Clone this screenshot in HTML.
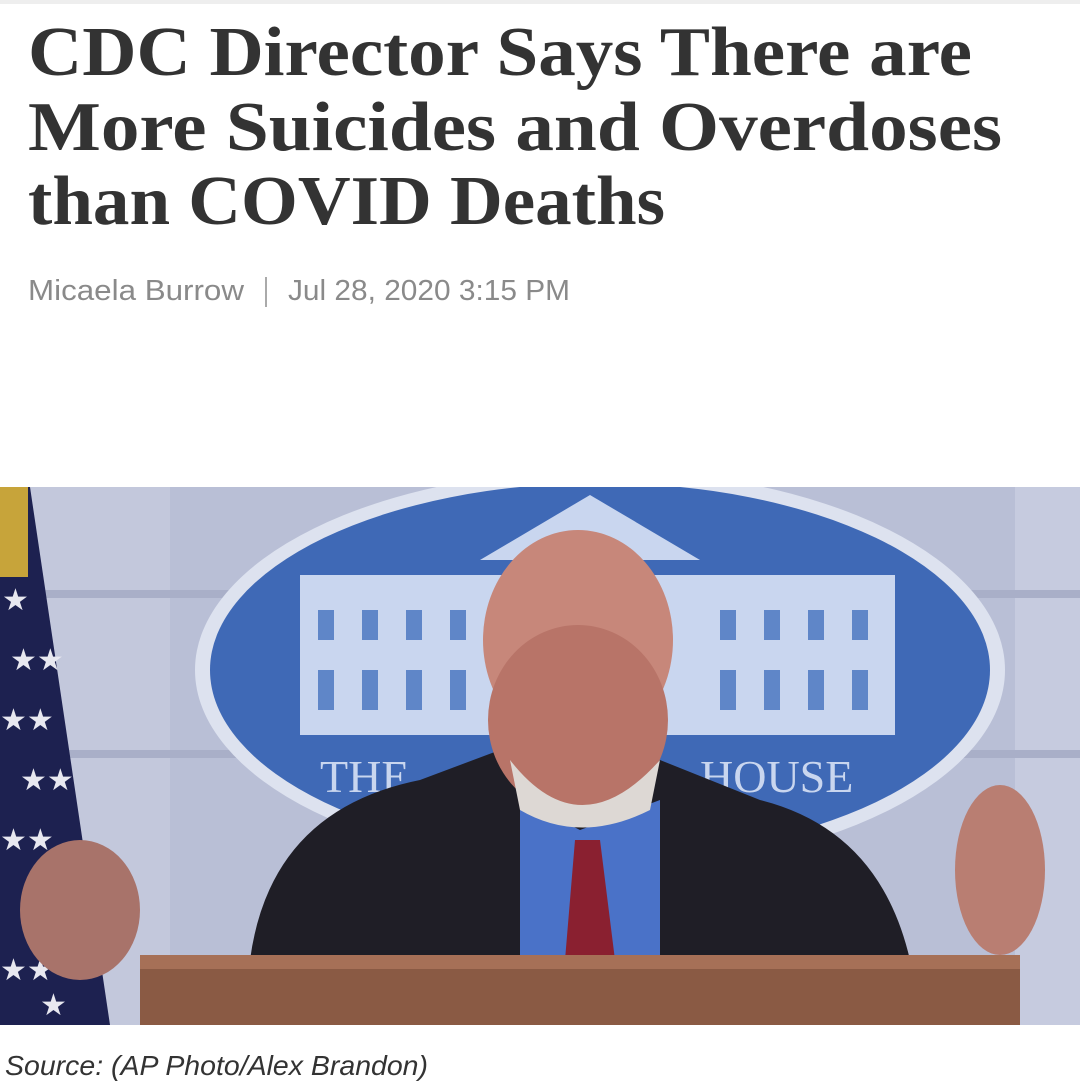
<!DOCTYPE html>
<html><head><meta charset="utf-8"><style>
html,body{margin:0;padding:0;background:#fff;}
body{width:1080px;height:1090px;overflow:hidden;position:relative;}
</style></head><body>
<svg width="1080" height="1090" viewBox="0 0 1080 1090" xmlns="http://www.w3.org/2000/svg" style="position:absolute;left:0;top:0">
<defs><clipPath id="ph"><rect x="0" y="487" width="1080" height="538"/></clipPath></defs>
<rect x="0" y="0" width="1080" height="4" fill="#eeeeee"/>
<g font-family="Liberation Serif, serif" font-weight="bold" font-size="70" fill="#333">
<text x="28" y="75" textLength="944" lengthAdjust="spacingAndGlyphs">CDC Director Says There are</text>
<text x="28" y="150" textLength="974" lengthAdjust="spacingAndGlyphs">More Suicides and Overdoses</text>
<text x="28" y="224" textLength="637" lengthAdjust="spacingAndGlyphs">than COVID Deaths</text>
</g>
<g font-family="Liberation Sans, sans-serif" font-size="29" fill="#8a8a8a">
<text x="28" y="300" textLength="216" lengthAdjust="spacingAndGlyphs">Micaela Burrow</text>
<rect x="265" y="277" width="2" height="30" fill="#aaa"/>
<text x="288" y="300" textLength="282" lengthAdjust="spacingAndGlyphs">Jul 28, 2020 3:15 PM</text>
</g>
<g clip-path="url(#ph)">
<rect x="0" y="487" width="1080" height="538" fill="#b9bfd6"/>
<rect x="30" y="487" width="140" height="538" fill="#c3c8dc"/>
<rect x="1015" y="487" width="65" height="538" fill="#c6cbdf"/>
<rect x="30" y="590" width="1050" height="8" fill="#a9afc8"/>
<rect x="30" y="750" width="1050" height="8" fill="#a9afc8"/>
<ellipse cx="600" cy="670" rx="405" ry="200" fill="#dde2ef"/>
<ellipse cx="600" cy="670" rx="390" ry="187" fill="#3f69b6"/>
<rect x="300" y="575" width="595" height="160" fill="#c9d6ef"/>
<polygon points="480,560 590,495 700,560" fill="#c9d6ef"/>
<g fill="#5f86c8">
<rect x="318" y="610" width="16" height="30"/><rect x="362" y="610" width="16" height="30"/><rect x="406" y="610" width="16" height="30"/><rect x="450" y="610" width="16" height="30"/>
<rect x="318" y="670" width="16" height="40"/><rect x="362" y="670" width="16" height="40"/><rect x="406" y="670" width="16" height="40"/><rect x="450" y="670" width="16" height="40"/>
<rect x="720" y="610" width="16" height="30"/><rect x="764" y="610" width="16" height="30"/><rect x="808" y="610" width="16" height="30"/><rect x="852" y="610" width="16" height="30"/>
<rect x="720" y="670" width="16" height="40"/><rect x="764" y="670" width="16" height="40"/><rect x="808" y="670" width="16" height="40"/><rect x="852" y="670" width="16" height="40"/>
</g>
<text x="320" y="792" font-family="Liberation Serif, serif" font-size="46" fill="#c9d6ef">THE</text>
<text x="700" y="792" font-family="Liberation Serif, serif" font-size="46" fill="#c9d6ef">HOUSE</text>
<polygon points="0,487 30,487 110,1025 0,1025" fill="#1d2150"/>
<rect x="0" y="487" width="28" height="90" fill="#c7a43a"/>
<g fill="#e8e8f0" font-size="30" font-family="DejaVu Sans, sans-serif">
<text x="2" y="610">★</text><text x="10" y="670">★★</text><text x="0" y="730">★★</text><text x="20" y="790">★★</text><text x="0" y="850">★★</text><text x="30" y="920">★★</text><text x="0" y="980">★★</text><text x="40" y="1015">★</text>
</g>
<path d="M250,960 Q270,810 420,780 L500,750 L660,760 L760,800 Q880,830 910,960 Z" fill="#1f1e26"/>
<polygon points="520,800 580,830 660,800 660,960 520,960" fill="#4a72c8"/>
<polygon points="575,840 600,840 615,960 565,960" fill="#8a2030"/>
<ellipse cx="578" cy="640" rx="95" ry="110" fill="#c7877a"/>
<ellipse cx="578" cy="720" rx="90" ry="95" fill="#b87468"/>
<path d="M510,760 Q580,850 660,760 L650,810 Q580,845 520,810 Z" fill="#ddd8d4"/>
<ellipse cx="1000" cy="870" rx="45" ry="85" fill="#b97e72"/>
<ellipse cx="80" cy="910" rx="60" ry="70" fill="#a8736a"/>
<rect x="140" y="955" width="880" height="70" fill="#8a5a44"/>
<rect x="140" y="955" width="880" height="14" fill="#a67057"/>
</g>
<text x="5" y="1075" font-family="Liberation Sans, sans-serif" font-style="italic" font-size="28" fill="#333" textLength="423" lengthAdjust="spacingAndGlyphs">Source: (AP Photo/Alex Brandon)</text>
</svg>
</body></html>
